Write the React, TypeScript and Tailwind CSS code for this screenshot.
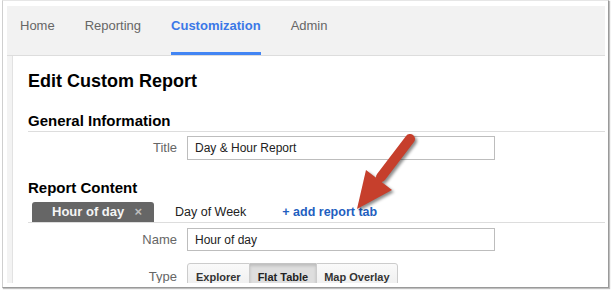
export default function App() {
  const navItems = ["Home", "Reporting", "Customization", "Admin"];
  const active = "Customization";

  return (
    <div className="relative w-[611px] h-[291px] bg-white overflow-hidden font-['Liberation_Sans',Arial,sans-serif]">
      <div className="ml-[2px] w-[607px] h-[288px] flex flex-col border-l border-t border-l-[#cfcfcf] border-t-[#e6e6e6] border-r border-b border-r-[#9a9a9a] border-b-[#9a9a9a] shadow-[1px_1px_1px_rgba(0,0,0,0.25)] pt-[5px] pl-[4px] pr-[3px] pb-[4px]">
        {/* top nav */}
        <div className="h-[50px] shrink-0 flex gap-[30px] pl-[13px] bg-[#f2f2f2] border-b border-[#dddddd]">
          {navItems.map((item) => (
            <div
              key={item}
              className={
                item === active
                  ? "pt-[12px] text-[13px] leading-[15px] font-bold text-[#3b78e7] border-b-[3px] border-[#4285f4]"
                  : "pt-[12px] text-[13px] leading-[15px] text-[#666666] border-b-[3px] border-transparent"
              }
            >
              {item}
            </div>
          ))}
        </div>

        {/* body */}
        <div className="flex-1 flex overflow-hidden">
          <div className="w-[6px] shrink-0 bg-[#f3f3f3] border-r border-[#e2e2e2]" />
          <div className="flex-1 pl-[15px] overflow-hidden">
            <h1 className="mt-[14px] text-[18px] leading-[22px] font-bold text-black">Edit Custom Report</h1>

            <h2 className="mt-[20px] pb-[1px] text-[15px] leading-[18px] font-bold text-black border-b border-[#dddddd]">
              General Information
            </h2>
            <div className="mt-[4px] flex items-center">
              <div className="w-[149px] text-right text-[13px] text-[#666666]">Title</div>
              <div className="ml-[10px] w-[308px] h-[24px] border border-[#bdbdbd] pl-[7px] flex items-center text-[12px] text-[#222222]">
                Day &amp; Hour Report
              </div>
            </div>

            <h2 className="mt-[19px] text-[15px] leading-[18px] font-bold text-black">Report Content</h2>
            <div className="mt-[5px] flex items-end border-b border-[#dddddd]">
              <div className="ml-[4px] w-[122px] h-[20px] rounded-t-[3px] bg-[#666666] flex items-center pl-[20px] pr-[12px] justify-between">
                <span className="text-[13px] font-bold text-[#f4f4f4]">Hour of day</span>
                <span className="text-[13px] font-bold text-[#bdbdbd]">×</span>
              </div>
              <div className="ml-[21px] h-[20px] flex items-center text-[12.5px] text-[#222222]">Day of Week</div>
              <div className="ml-[36px] h-[20px] flex items-center text-[12.5px] font-bold text-[#1f5fbf]">
                + add report tab
              </div>
            </div>

            <div className="mt-[5px] flex items-center">
              <div className="w-[149px] text-right text-[13px] text-[#666666]">Name</div>
              <div className="ml-[10px] w-[308px] h-[23px] border border-[#bdbdbd] pl-[7px] flex items-center text-[12px] text-[#222222]">
                Hour of day
              </div>
            </div>

            <div className="mt-[12px] flex items-start">
              <div className="w-[149px] pt-[4px] text-right text-[13px] text-[#666666]">Type</div>
              <div className="ml-[10px] flex">
                <div className="h-[26px] px-[8px] pt-[7px] rounded-tl-[3px] border border-[#cccccc] bg-gradient-to-b from-[#fafafa] to-[#eeeeee] text-[11px] leading-[13px] font-bold text-[#333333]">
                  Explorer
                </div>
                <div className="h-[26px] px-[8px] pt-[7px] border-y border-[#c4c4c4] bg-[#dedede] shadow-[inset_0_2px_3px_rgba(0,0,0,0.15)] text-[11px] leading-[13px] font-bold text-[#222222]">
                  Flat Table
                </div>
                <div className="h-[26px] px-[7px] pt-[7px] rounded-tr-[3px] border border-[#cccccc] bg-gradient-to-b from-[#fafafa] to-[#eeeeee] text-[11px] leading-[13px] font-bold text-[#333333]">
                  Map Overlay
                </div>
              </div>
            </div>
          </div>
        </div>
      </div>

      {/* annotation arrow */}
      <svg
        className="absolute left-0 top-0 pointer-events-none"
        width="611"
        height="291"
        viewBox="0 0 611 291"
        style={{ filter: "drop-shadow(2px 2px 1.5px rgba(0,0,0,0.45))" }}
      >
        <line x1="410" y1="139" x2="381" y2="177" stroke="#c63f2c" strokeWidth="10" strokeLinecap="round" />
        <polygon points="366,170 392,190 357,209" fill="#c63f2c" />
      </svg>
    </div>
  );
}
